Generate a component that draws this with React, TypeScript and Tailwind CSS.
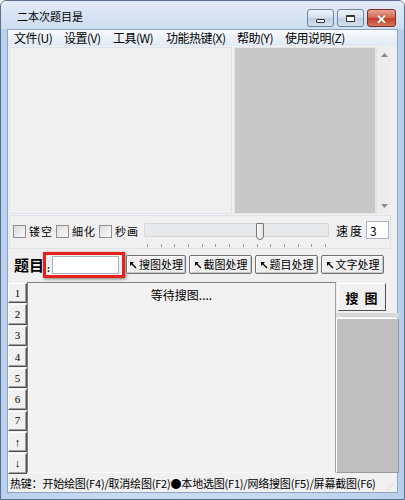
import React from 'react';

const font = { fontFamily: '"Noto Sans CJK SC", "Noto Sans", sans-serif' };

const menus = [
  { label: '文件(U)', w: 'w-[50px]' },
  { label: '设置(V)', w: 'w-[49px]' },
  { label: '工具(W)', w: 'w-[53px]' },
  { label: '功能热键(X)', w: 'w-[71px]' },
  { label: '帮助(Y)', w: 'w-[48px]' },
  { label: '使用说明(Z)', w: 'w-[80px]' },
];
const sideKeys = ['1', '2', '3', '4', '5', '6', '7', '↑', '↓'];
const tools = ['搜图处理', '截图处理', '题目处理', '文字处理'];

const Check = ({ label }: { label: string }) => (
  <div className="flex items-center gap-[3px] shrink-0 whitespace-nowrap">
    <span className="w-[13px] h-[13px] shrink-0 border border-[#8f8f8f] bg-[linear-gradient(135deg,#dcdcdc,#fbfbfb)]" />
    <span className="text-[11px] tracking-[1px] leading-none text-black">{label}</span>
  </div>
);

const Arrow = () => (
  <svg width="8" height="8" viewBox="0 0 8 8" className="shrink-0 mr-[2px]">
    <path d="M7 7 L1.5 1.5" stroke="#000" strokeWidth="1.2" />
    <path d="M1 1 L5 1 L1 5 Z" fill="#000" />
  </svg>
);

const TitleButton = ({ kind }: { kind: 'min' | 'max' | 'close' }) => {
  const bg =
    kind === 'close'
      ? 'bg-[linear-gradient(#e8a394,#d5654f_50%,#c1412b_51%,#d7735c)] border-[#7a2e22] w-[29px]'
      : 'bg-[linear-gradient(#eef3fa,#d4e0ef_50%,#bfcfe4_51%,#d3e0ef)] border-[#6f83a0] w-[27px]';
  return (
    <div className={`h-[18px] border rounded-[3px] flex items-center justify-center ${bg}`}>
      {kind === 'min' && <span className="w-[9px] h-[4px] border border-[#333] bg-white mt-[5px] rounded-[1px]" />}
      {kind === 'max' && <span className="w-[9px] h-[7px] border border-[#333] border-t-2 bg-white rounded-[1px]" />}
      {kind === 'close' && <span className="text-white text-[13px] font-bold leading-none [text-shadow:0_0_1px_#6a1a10]">✕</span>}
    </div>
  );
};

const App: React.FC = () => {
  return (
    <div
      className="w-[405px] h-[500px] flex flex-col border border-[#5a6f8c] rounded-t-[6px] bg-[linear-gradient(90deg,#b9d1ee,#c9dbf1_30%,#c6d9f0_70%,#b8cfec)] overflow-hidden"
      style={font}
    >
      {/* title bar */}
      <div className="h-[28px] shrink-0 flex items-start pl-[16px] pr-[8px] bg-[linear-gradient(#e3ecf7,#cddcf0)]">
        <span className="mt-[10px] text-[11px] leading-none text-black whitespace-nowrap">二本次题目是</span>
        <div className="ml-auto mt-[8px] flex gap-[3px]">
          <TitleButton kind="min" />
          <TitleButton kind="max" />
          <TitleButton kind="close" />
        </div>
      </div>

      {/* client */}
      <div className="mx-[6px] flex-1 flex flex-col bg-[#f0f0f0] border border-[#8ea4c1]">
        {/* menu */}
        <div className="h-[16px] shrink-0 flex items-center pl-[6px] bg-[linear-gradient(#f8fafd,#e0e9f5)] text-[12px] leading-none text-black tracking-[-0.5px] whitespace-nowrap">
          {menus.map((m) => (
            <span key={m.label} className={`${m.w} shrink-0`}>
              {m.label}
            </span>
          ))}
        </div>

        {/* preview area */}
        <div className="h-[168px] shrink-0 flex pl-[1px] pt-[1px] pr-[6px]">
          <div className="w-[225px] h-[167px] bg-[#f0f0f0] border border-[#dfe3ea]" />
          <div className="ml-[2px] w-[143px] h-[167px] bg-[#c8c8c8] border border-[#e6e6e6]" />
          <div className="w-[15px] h-[167px] bg-[#ececec] border-l border-[#e2e2e2] flex flex-col items-center justify-between py-[6px]">
            <svg width="7" height="4" viewBox="0 0 7 4"><path d="M0 4 L3.5 0 L7 4 Z" fill="#8a8a8a" /></svg>
            <svg width="7" height="4" viewBox="0 0 7 4"><path d="M0 0 L3.5 4 L7 0 Z" fill="#8a8a8a" /></svg>
          </div>
        </div>

        {/* options row */}
        <div className="mt-[1px] ml-[1px] mr-[6px] h-[34px] shrink-0 border border-[#e0e4ea] flex items-start pl-[3px] pt-[9px] whitespace-nowrap">
          <div className="shrink-0 flex gap-[3px]">
            <Check label="镂空" />
            <Check label="細化" />
            <Check label="秒画" />
          </div>
          <div className="ml-[5px] -mt-[2px] w-[185px] shrink-0 flex flex-col">
            <div className="relative h-[14px] bg-[#e7e9ea] border border-[#d4d6d8] rounded-[2px]">
              <div className="absolute left-[111px] -top-[1px] w-[8px] h-[17px] bg-[linear-gradient(90deg,#fafafa,#e2e2e2)] border border-[#777] rounded-b-[4px] rounded-t-[1px]" />
            </div>
            <div className="mt-[7px] flex justify-between px-[3px]">
              {Array.from({ length: 14 }).map((_, i) => (
                <span key={i} className="w-px h-[3px] bg-[#9a9a9a]" />
              ))}
            </div>
          </div>
          <span className="ml-[7px] text-[12px] tracking-[2px] leading-none shrink-0">速度</span>
          <div className="ml-[2px] -mt-[4px] w-[23px] h-[18px] shrink-0 bg-white border border-[#a9b3c2] text-[12px] leading-none pl-[3px] pt-[3px]">
            3
          </div>
        </div>

        {/* question row */}
        <div className="h-[31px] shrink-0 flex items-center pl-[6px] whitespace-nowrap">
          <span className="text-[15px] font-bold leading-none text-black shrink-0">题目</span>
          <div className="-ml-[1px] w-[82px] h-[26px] shrink-0 border-[3px] border-[#e8201c] shadow-[1px_1px_3px_rgba(0,0,0,0.5)] flex items-center">
            <span className="w-[6px] text-[9px] font-bold leading-none text-black mt-[7px] pl-[1px]">:</span>
            <div className="w-[67px] h-[18px] bg-white border border-[#9fb4cc]" />
          </div>
          <div className="ml-[1px] flex gap-[3px]">
            {tools.map((t, i) => (
              <div
                key={t}
                className={`h-[19px] shrink-0 ${i === 0 ? 'w-[60px]' : 'w-[63px]'} border border-[#6f6f6f] rounded-[2px] shadow-[inset_1px_1px_0_#fff,inset_-1px_-1px_0_#c8c8c8] bg-[#f0f0f0] flex items-center justify-center text-[11px] leading-none text-black`}
              >
                <Arrow />
                {t}
              </div>
            ))}
          </div>
        </div>

        {/* main area */}
        <div className="flex shrink-0 pr-[1px]">
          <div className="w-[19px] shrink-0 flex flex-col gap-px pt-[3px]">
            {sideKeys.map((k) => (
              <div
                key={k}
                className="h-[20.3px] border border-t-white border-l-white border-b-[#505050] border-r-[#505050] shadow-[inset_-1px_-1px_0_#a0a0a0] bg-[#f0f0f0] flex items-center justify-center text-[11px] leading-none text-black font-['Liberation_Serif',serif]"
              >
                {k}
              </div>
            ))}
          </div>
          <div className="w-[309px] h-[191px] shrink-0 mt-[2px] border border-t-[#808080] border-l-[#808080] border-b-[#f8f8f8] border-r-[#a0a0a0] bg-[#f2f2f2] flex justify-center pt-[6px]">
            <span className="text-[12px] leading-none text-black whitespace-nowrap">等待搜图....</span>
          </div>
          <div className="w-[63px] shrink-0 flex flex-col">
            <div className="ml-[2px] mt-[3px] w-[48px] h-[28px] border border-t-white border-l-white border-b-[#505050] border-r-[#505050] bg-[#f0f0f0] flex items-center justify-center text-[13px] font-bold tracking-[6px] pl-[5px] leading-none whitespace-nowrap">
              搜图
            </div>
            <div className="mt-[2px] h-[4px] bg-[#d8d8d8]" />
            <div className="mt-[1px] flex-1 bg-[#c0c0c0] border border-t-white border-l-white border-r-[#9a9a9a] border-b-[#9a9a9a] mb-[1px]" />
          </div>
        </div>

        {/* status bar */}
        <div className="mt-[1px] h-[17px] shrink-0 flex items-center pl-[2px] text-[11px] leading-none text-black tracking-[-0.2px] whitespace-nowrap relative">
          <span>热键：开始绘图(F4)/取消绘图(F2)●本地选图(F1)/网络搜图(F5)/屏幕截图(F6)</span>
          <span className="absolute right-[3px] bottom-[2px] text-[7px] leading-none text-[#a0a0a0]">⋰</span>
        </div>
      </div>
      <div className="h-[6px] shrink-0" />
    </div>
  );
};

export default App;
